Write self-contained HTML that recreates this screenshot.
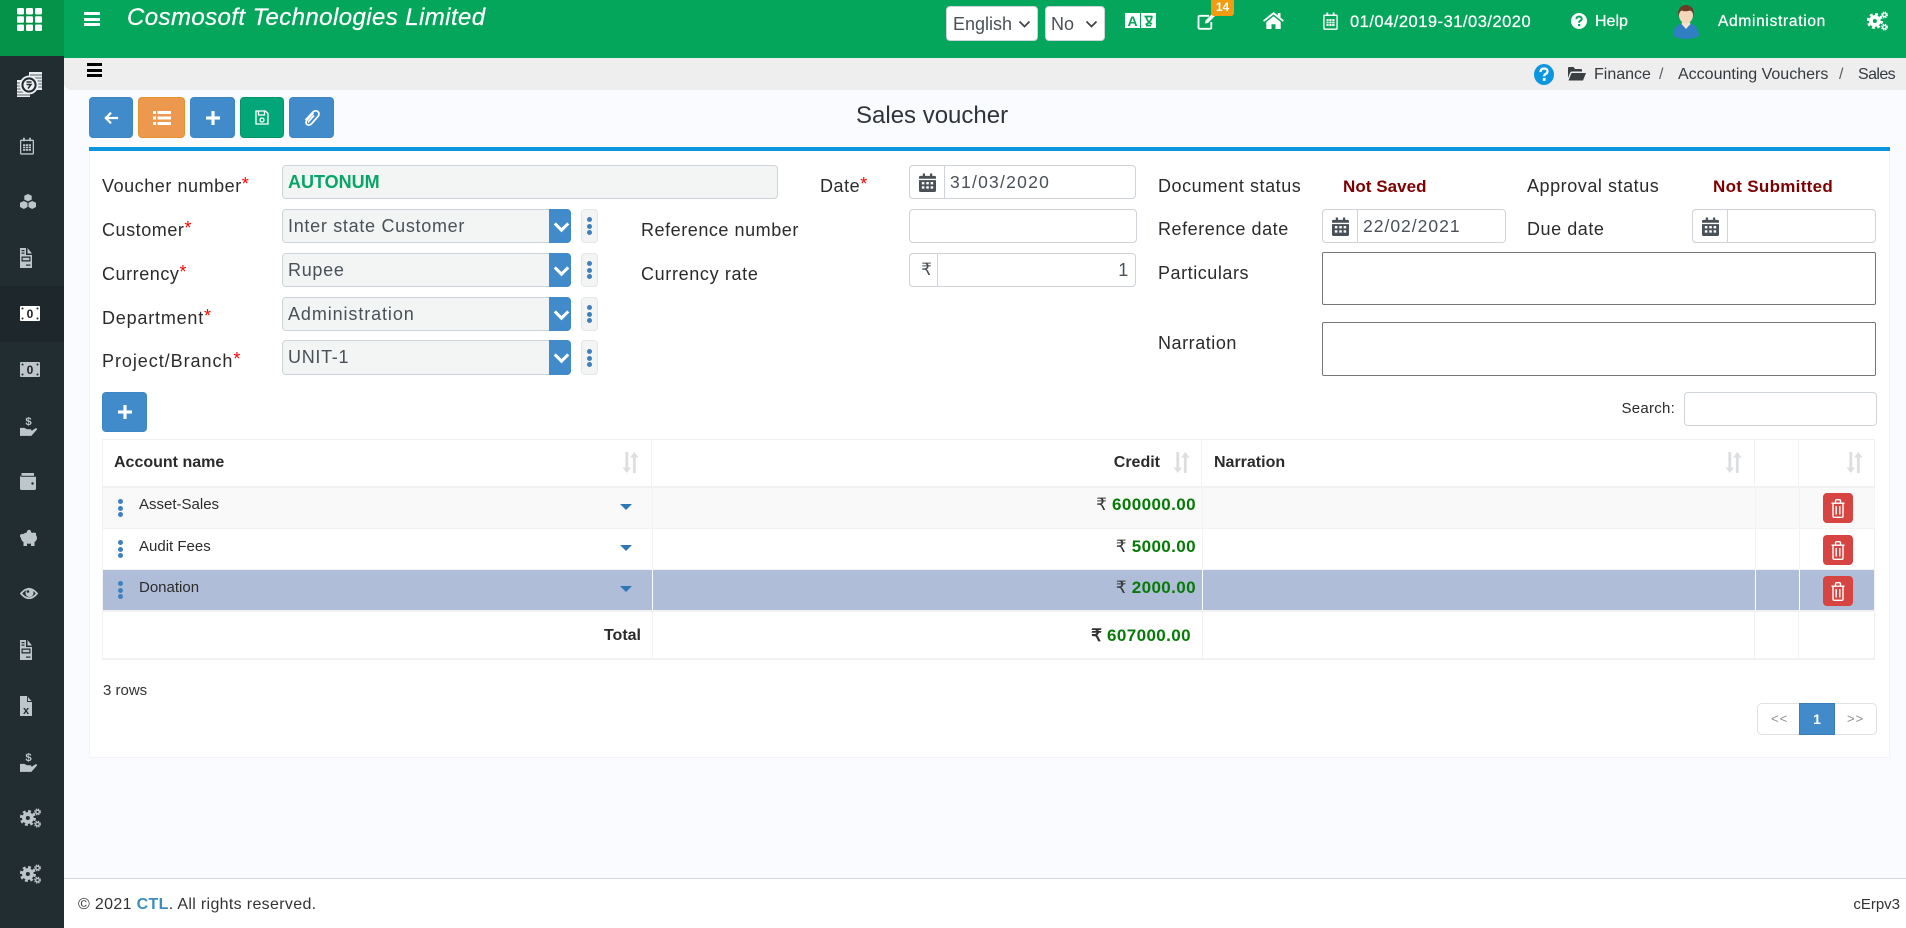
<!DOCTYPE html>
<html lang="en"><head><meta charset="utf-8"><title>Sales voucher</title>
<style>
*{box-sizing:border-box}
html,body{margin:0;padding:0;width:1906px;height:928px;overflow:hidden;background:#fafbfe;font-family:"Liberation Sans",sans-serif;color:#2a2a2a}
.a{position:absolute}
.t{position:absolute;line-height:20px;white-space:nowrap}
.l{font-size:18px;letter-spacing:.55px;color:#2b2b2b}
.l i{color:#f00;font-style:normal;font-size:18px;position:relative;top:-2px;letter-spacing:0}
.w{color:#fff;-webkit-text-stroke:.25px #fff}
.box{position:absolute;border:1px solid #ced4da;border-radius:4px;background:#fff}
.g{background:#f3f5f5}
.add{position:absolute;border:1px solid #ced4da;border-radius:4px 0 0 4px;background:#fff;display:flex;align-items:center;justify-content:center}
.val{font-size:18px;letter-spacing:.7px;color:#495057}
.sb{position:absolute;left:549px;width:22px;height:34px;background:#428bca;border-radius:0 4px 4px 0}
.sb:after{content:"";position:absolute;left:7px;top:10px;width:8px;height:8px;border-right:3px solid #fff;border-bottom:3px solid #fff;transform:rotate(45deg)}
.db{position:absolute;left:581px;width:17px;height:34px;background:#f3f5f5;border:1px solid #e3e6e8;border-radius:4px}
.dots{position:absolute;width:5px}
.dots b{display:block;width:5px;height:5px;border-radius:50%;background:#3f80c0;margin-bottom:1.5px}
.btn{position:absolute;top:97px;height:41px;border-radius:4px;display:flex;align-items:center;justify-content:center}
.ln{position:absolute;background:#f2f2f2}
.th{position:absolute;font-size:16px;font-weight:bold;color:#2b2b2b;line-height:20px;white-space:nowrap}
.cell{position:absolute;font-size:15px;line-height:20px;white-space:nowrap;color:#2b2b2b}
.amt{position:absolute;right:710px;font-size:17px;line-height:20px;white-space:nowrap;font-weight:bold;color:#067a06;letter-spacing:.4px}
.amt span{font-weight:normal;color:#333;letter-spacing:0}
.car{position:absolute;left:620px;width:0;height:0;border-left:6.5px solid transparent;border-right:6.5px solid transparent;border-top:6px solid #2f78b7}
.del{position:absolute;left:1823px;width:30px;height:30px;background:#d64541;border-radius:4px;border:1px solid #d9433f;display:flex;align-items:center;justify-content:center}
.sort{position:absolute;top:452px}
</style></head>
<body>
<svg width="0" height="0" style="position:absolute">
<defs>
<symbol id="cal" viewBox="0 0 18 20"><path d="M0 6V4.500Q0 3 1.500 3H4V0.500h2.400V3h5.200V0.500H14V3h2.500Q18 3 18 4.500V6zM0 7.500h18V18.500Q18 20 16.500 20h-15Q0 20 0 18.500z" fill="currentColor"/><g fill="#fff"><rect x="3" y="9.500" width="2.700" height="2.500"/><rect x="7.700" y="9.500" width="2.700" height="2.500"/><rect x="12.300" y="9.500" width="2.700" height="2.500"/><rect x="3" y="14" width="2.700" height="2.500"/><rect x="7.700" y="14" width="2.700" height="2.500"/><rect x="12.300" y="14" width="2.700" height="2.500"/></g></symbol>
<symbol id="calo" viewBox="0 0 16 20"><path d="M1.500 3.500h13a.8.8 0 0 1 .8.8v14a.8.8 0 0 1-.8.8h-13a.8.8 0 0 1-.8-.8v-14a.8.8 0 0 1 .8-.8z" fill="none" stroke="currentColor" stroke-width="1.500"/><path d="M3.500 0.500h2v4h-2zM10.500 0.500h2v4h-2z" fill="currentColor"/><path d="M3.500 8h9v7.500h-9z" fill="currentColor"/><path d="M6.300 8v7.500M9.500 8v7.500M3.500 10.500h9M3.500 13h9" stroke="#2b3338" stroke-width=".8"/></symbol>
<symbol id="gears" viewBox="0 0 24 22"><g fill="none" stroke="currentColor"><circle cx="9" cy="11" r="4.500" stroke-width="4.400"/><circle cx="9" cy="11" r="7.800" stroke-width="2.800" stroke-dasharray="3.300 2.825"/><circle cx="20" cy="4" r="2" stroke-width="1.500"/><circle cx="20" cy="4" r="3.300" stroke-width="1.300" stroke-dasharray="1.600 1"/><circle cx="20" cy="18" r="2" stroke-width="1.500"/><circle cx="20" cy="18" r="3.300" stroke-width="1.300" stroke-dasharray="1.600 1"/></g></symbol>
<symbol id="doc" viewBox="0 0 12 20"><path d="M0 0h6v7h6v13H0z" fill="currentColor"/><path d="M7.500 0L12 5.500H7.500z" fill="currentColor"/><g fill="#222d32"><rect x="1.500" y="2" width="3" height="1.200"/><rect x="1.500" y="4.500" width="3" height="1.200"/><rect x="1.500" y="8.500" width="9" height="5"/><rect x="6" y="16.500" width="4.500" height="1.200"/></g><rect x="2.700" y="9.800" width="6.600" height="2.400" fill="currentColor"/></symbol>
<symbol id="money" viewBox="0 0 20 15"><rect width="20" height="15" rx="1" fill="currentColor"/><text x="10" y="12" text-anchor="middle" font-family="Liberation Sans,sans-serif" font-weight="bold" font-size="12" fill="#222">0</text><g fill="#222"><circle cx="2.500" cy="2.500" r="1"/><circle cx="17.500" cy="2.500" r="1"/><circle cx="2.500" cy="12.500" r="1"/><circle cx="17.500" cy="12.500" r="1"/></g></symbol>
<symbol id="hand" viewBox="0 0 18 21"><text x="9" y="9.500" text-anchor="middle" font-family="Liberation Sans,sans-serif" font-weight="bold" font-size="12" fill="currentColor">$</text><path d="M0 12.500h4.500l3 1.500h3.500q1.500.2 1.200 1.800l4-2.800q1.900-.9 1.800 1.200L12 21H0z" fill="currentColor"/></symbol>
<symbol id="trash" viewBox="0 0 14 19"><g fill="none" stroke="#fff" stroke-width="1.400"><path d="M0.500 4.200h13"/><path d="M4.500 4V2q0-1.300 1.300-1.300h2.400q1.300 0 1.300 1.300v2"/><path d="M2 4.500v12.500q0 1.300 1.300 1.300h7.400q1.300 0 1.300-1.300V4.500"/><path d="M5.200 7v8.500M8.800 7v8.500"/></g></symbol>
<symbol id="sorti" viewBox="0 0 17 21"><path d="M3.400 0h2.800v15.500h2.800L4.800 21 .6 15.500h2.800z" fill="#dcdee0"/><path d="M10.900 21h2.800V5.500h2.800L12.300 0 8.100 5.500h2.800z" fill="#dcdee0"/></symbol>
</defs></svg>

<!-- sidebar -->
<div class="a" style="left:0;top:0;width:64px;height:928px;background:#222d32"></div>
<div class="a" style="left:0;top:0;width:64px;height:56px;background:#059349"></div>
<div class="a" style="left:0;top:286px;width:64px;height:56px;background:#1e272c"></div>
<svg class="a" style="left:17px;top:8px" width="25" height="23" fill="#fff"><rect width="7" height="6.500" rx="1.200"/><rect x="9" width="7" height="6.500" rx="1.200"/><rect x="18" width="7" height="6.500" rx="1.200"/><rect y="8.300" width="7" height="6.500" rx="1.200"/><rect x="9" y="8.300" width="7" height="6.500" rx="1.200"/><rect x="18" y="8.300" width="7" height="6.500" rx="1.200"/><rect y="16.500" width="7" height="6.500" rx="1.200"/><rect x="9" y="16.500" width="7" height="6.500" rx="1.200"/><rect x="18" y="16.500" width="7" height="6.500" rx="1.200"/></svg>
<svg class="a" style="left:17px;top:72px" width="25" height="26"><rect x="0" y="8" width="13" height="17" fill="#e8ecef"/><rect x="12" y="0" width="13" height="18" fill="#e8ecef"/><path d="M0 11h13M0 14h13M0 17h13M0 20h13M0 23h13M13 3h12M13 6h12M13 9h12M13 12h12M13 15h12" stroke="#5a646a" stroke-width="1"/><circle cx="12" cy="13" r="8.500" fill="#222d32" stroke="#eef1f3" stroke-width="1.800"/><circle cx="12" cy="13" r="5.500" fill="#eef1f3"/><path d="M9.500 10h5M9.500 12.500h4.500l-3 4" stroke="#222d32" stroke-width="1.500" fill="none"/></svg>
<svg class="a" style="left:20px;top:136px;color:#bdc6cb" width="14" height="20"><use href="#calo"/></svg>
<svg class="a" style="left:20px;top:194px" width="16" height="16" viewBox="0 0 16 16" fill="#bdc6cb"><path d="M8 0l3.700 1.800v3.800L8 7.400 4.300 5.600V1.800z"/><path d="M3.900 7L7.500 8.800v4.200L3.900 15 0 13v-4.200zM12.100 7l3.900 1.800V13l-3.900 2-3.600-2V8.800z"/></svg>
<svg class="a" style="left:20px;top:248px;color:#bdc6cb" width="12" height="20"><use href="#doc"/></svg>
<svg class="a" style="left:20px;top:306px;color:#fff" width="20" height="15"><use href="#money"/></svg>
<svg class="a" style="left:20px;top:362px;color:#bdc6cb" width="20" height="15"><use href="#money"/></svg>
<svg class="a" style="left:20px;top:416px;color:#bdc6cb" width="17" height="20"><use href="#hand"/></svg>
<svg class="a" style="left:20px;top:473px" width="16" height="17" viewBox="0 0 16 17" fill="#bdc6cb"><path d="M1.500 0H14v2.800H1.500z"/><path d="M1.500 3.800H16V15.500q0 1.500-1.500 1.500h-13Q0 17 0 15.500V2q0 1.800 1.500 1.800z"/><circle cx="12.500" cy="10.500" r="1.200" fill="#222d32"/></svg>
<svg class="a" style="left:20px;top:529px" width="18" height="17" viewBox="0 0 18 17" fill="#bdc6cb"><ellipse cx="9" cy="9" rx="8" ry="5.700"/><path d="M3.500 12h3.500v5H3.500zM11 12h3.500v5H11z"/><path d="M7 2q2-2.500 4 0v2H7z"/><path d="M13 3.500l3 .5v3h-3z"/><circle cx="2" cy="7" r="2"/></svg>
<svg class="a" style="left:20px;top:586px" width="18" height="15" viewBox="0 0 18 15"><path d="M1 7.500Q9-2 17 7.500 9 17 1 7.500z" fill="none" stroke="#bdc6cb" stroke-width="1.800"/><circle cx="9.500" cy="7" r="4" fill="#bdc6cb"/><circle cx="8" cy="5.500" r="1.300" fill="#222d32"/></svg>
<svg class="a" style="left:20px;top:640px;color:#bdc6cb" width="12" height="20"><use href="#doc"/></svg>
<svg class="a" style="left:20px;top:696px" width="12" height="20" viewBox="0 0 12 20"><path d="M0 0h7l5 5.500V20H0z" fill="#bdc6cb"/><path d="M7.500 .5v5h4.500" fill="none" stroke="#222d32" stroke-width=".9"/><text x="6" y="18" text-anchor="middle" font-family="Liberation Sans,sans-serif" font-weight="bold" font-size="11" fill="#222d32">x</text></svg>
<svg class="a" style="left:20px;top:752px;color:#bdc6cb" width="17" height="20"><use href="#hand"/></svg>
<svg class="a" style="left:20px;top:808px;color:#bdc6cb" width="21" height="20"><use href="#gears"/></svg>
<svg class="a" style="left:20px;top:864px;color:#bdc6cb" width="21" height="20"><use href="#gears"/></svg>

<!-- top bar -->
<div class="a" style="left:64px;top:0;width:1842px;height:58px;background:#03a65a"></div>
<div class="a" style="left:84px;top:12px;width:16px;height:3px;background:#fff"></div>
<div class="a" style="left:84px;top:17.500px;width:16px;height:3px;background:#fff"></div>
<div class="a" style="left:84px;top:23px;width:16px;height:3px;background:#fff"></div>
<div class="t w" style="left:127px;top:8px;font-size:24px;line-height:20px;font-style:italic;letter-spacing:.42px">Cosmosoft Technologies Limited</div>
<div class="a" style="left:946px;top:6px;width:92px;height:35px;background:#fff;border:1px solid #ced4da;border-radius:4px"></div>
<div class="t" style="left:953px;top:14px;font-size:18px;color:#495057">English</div>
<svg class="a" style="left:1018px;top:20px" width="13" height="9"><path d="M1.500 1.500L6.500 6.500 11.500 1.500" fill="none" stroke="#3d4448" stroke-width="1.700"/></svg>
<div class="a" style="left:1045px;top:6px;width:60px;height:35px;background:#fff;border:1px solid #ced4da;border-radius:4px"></div>
<div class="t" style="left:1051px;top:14px;font-size:18px;color:#495057">No</div>
<svg class="a" style="left:1085px;top:20px" width="13" height="9"><path d="M1.500 1.500L6.500 6.500 11.500 1.500" fill="none" stroke="#3d4448" stroke-width="1.700"/></svg>
<svg class="a" style="left:1125px;top:13px" width="31" height="16" viewBox="0 0 31 16"><rect width="15" height="15" fill="#fff"/><rect x="16" width="15" height="15" fill="#fff"/><text x="7.500" y="13" text-anchor="middle" font-family="Liberation Sans,sans-serif" font-weight="bold" font-size="14" fill="#03a65a">A</text><path d="M19.500 3.500h8M21 3.500q1.500 6 6 7.500M27 3.500q-1 6-6.500 8M21 12.500h5" fill="none" stroke="#03a65a" stroke-width="1.700"/></svg>
<svg class="a" style="left:1197px;top:12px" width="20" height="18" viewBox="0 0 20 18" fill="none"><path d="M12 3.800H2.800Q1.500 3.800 1.500 5V15.500Q1.500 16.800 2.800 16.800H13Q14.300 16.800 14.300 15.500V10" stroke="#fff" stroke-width="1.800"/><path d="M8 11.500l.5-3L15.500 1.500l2.500 2.500-7 7z" fill="#fff"/></svg>
<div class="a" style="left:1211px;top:0;width:23px;height:16px;background:#f39c12;border-radius:0 0 3px 3px;color:#fff;font-weight:bold;font-size:12px;line-height:15px;text-align:center">14</div>
<svg class="a" style="left:1263px;top:12px" width="21" height="17" viewBox="0 0 21 17" fill="#fff"><path d="M10.500 0L0 8.500l1.200 1.300L10.500 2.500l9.300 7.300L21 8.500l-3.500-2.900V1h-2.700v2.400z"/><path d="M10.500 4.300L3.300 10v7h5.200v-4.800h4V17h5.200v-7z"/></svg>
<svg class="a" style="left:1323px;top:12px" width="15" height="18" viewBox="0 0 16 20"><path d="M1.500 3.500h13a.8.8 0 0 1 .8.8v14a.8.8 0 0 1-.8.8h-13a.8.8 0 0 1-.8-.8v-14a.8.8 0 0 1 .8-.8z" fill="none" stroke="#fff" stroke-width="1.500"/><path d="M3.500 0.500h2v4h-2zM10.500 0.500h2v4h-2z" fill="#fff"/><path d="M3.500 8h9v7.500h-9z" fill="#fff"/><path d="M6.300 8v7.500M9.500 8v7.500M3.500 10.500h9M3.500 13h9" stroke="#03a65a" stroke-width=".8"/></svg>
<div class="t w" style="left:1350px;top:12px;font-size:16.500px;letter-spacing:.5px">01/04/2019-31/03/2020</div>
<svg class="a" style="left:1571px;top:13px" width="16" height="16" viewBox="0 0 16 16"><circle cx="8" cy="8" r="8" fill="#fff"/><path d="M5.300 6.200Q5.500 3.600 8 3.600 10.800 3.700 10.700 6 10.600 7.300 9 8 8.100 8.400 8.100 9.800" fill="none" stroke="#03a65a" stroke-width="1.900"/><rect x="7" y="11" width="2.200" height="2.200" fill="#03a65a"/></svg>
<div class="t w" style="left:1595px;top:12px;font-size:16px">Help</div>
<svg class="a" style="left:1672px;top:5px" width="28" height="34" viewBox="0 0 28 34"><path d="M1 31q0-10 8-12h10q8 2 8 12-6 3-13 3T1 31z" fill="#2f7fc2"/><path d="M9.500 19l4.500 5 4.500-5-1.500-4h-6z" fill="#f6e2d0"/><ellipse cx="14" cy="10" rx="7" ry="8.500" fill="#f5d6bb"/><path d="M6.500 12Q4.500 1 14 0 23.500 1 21.500 12 21 6 18 5.500 13 7 9.500 5.500 7 7 6.500 12z" fill="#6b3d27"/></svg>
<div class="t w" style="left:1718px;top:12px;font-size:15.500px;letter-spacing:.7px">Administration</div>
<svg class="a" style="left:1867px;top:11px;color:#fff" width="21" height="20"><use href="#gears"/></svg>

<!-- breadcrumb -->
<div class="a" style="left:64px;top:58px;width:1842px;height:32px;background:#eeeeee;border-bottom-left-radius:7px"></div>
<div class="a" style="left:87px;top:63px;width:15px;height:3px;background:#000"></div>
<div class="a" style="left:87px;top:68.500px;width:15px;height:3px;background:#000"></div>
<div class="a" style="left:87px;top:74px;width:15px;height:3px;background:#000"></div>
<svg class="a" style="left:1534px;top:64px" width="20" height="21" viewBox="0 0 20 21"><ellipse cx="10" cy="10.500" rx="10" ry="10.500" fill="#0c96e0"/><path d="M6.500 8Q6.700 4.500 10 4.500 13.600 4.600 13.500 7.500 13.400 9.200 11.500 10 10.200 10.600 10.200 12.400" fill="none" stroke="#fff" stroke-width="2.300"/><rect x="8.800" y="14" width="2.800" height="2.800" fill="#fff"/></svg>
<svg class="a" style="left:1568px;top:67px" width="18" height="14" viewBox="0 0 18 14" fill="#3a3f42"><path d="M0 1q0-1 1-1h4.500l1.500 2h6q1 0 1 1v1.500H4Q2.500 4.500 2 6L0 11z"/><path d="M3.500 6H18l-3 7.500H.5z"/></svg>
<div class="t" style="left:1594px;top:65px;font-size:16px;color:#343a40">Finance</div>
<div class="t" style="left:1659px;top:65px;font-size:16px;color:#5b6166">/</div>
<div class="t" style="left:1678px;top:65px;font-size:16px;color:#343a40">Accounting Vouchers</div>
<div class="t" style="left:1839px;top:65px;font-size:16px;color:#5b6166">/</div>
<div class="t" style="left:1858px;top:65px;font-size:16px;letter-spacing:-.6px;color:#343a40">Sales</div>

<!-- toolbar -->
<div class="btn" style="left:89px;width:44px;background:#428bca;border:1px solid #3f85c2"><svg width="15" height="14" viewBox="0 0 17 15"><path d="M8 1.500L2 7.500l6 6M2.500 7.500H16" fill="none" stroke="#fff" stroke-width="2.500"/></svg></div>
<div class="btn" style="left:138px;width:47px;background:#ec994f;border:1px solid #e8912f"><svg width="18" height="14" viewBox="0 0 18 14" fill="#fff"><rect width="3" height="3"/><rect x="4.500" width="13.500" height="3"/><rect y="5.500" width="3" height="3"/><rect x="4.500" y="5.500" width="13.500" height="3"/><rect y="11" width="3" height="3"/><rect x="4.500" y="11" width="13.500" height="3"/></svg></div>
<div class="btn" style="left:190px;width:45px;background:#428bca;border:1px solid #3f85c2"><svg width="14" height="14" viewBox="0 0 16 16" fill="#fff"><rect x="6.200" width="3.600" height="16"/><rect y="6.200" width="16" height="3.600"/></svg></div>
<div class="btn" style="left:240px;width:44px;background:#03a678;border:1px solid #059469"><svg width="14" height="15" viewBox="0 0 14 15" fill="none" stroke="#fff" stroke-width="1.300"><path d="M1 1h9.500L13 3.500V14H1z"/><path d="M3.500 1v4h6V1"/><circle cx="7" cy="10" r="2"/></svg></div>
<div class="btn" style="left:289px;width:45px;background:#428bca;border:1px solid #3f85c2"><svg width="17" height="18" viewBox="0 0 17 18" fill="none" stroke="#fff" stroke-width="1.700"><path d="M10.500 4L4 11q-2 2.800 0 4.500 2 1.500 4.300-.5l6.700-7.500q2-3-.2-5-2.400-1.700-4.800.5L2.500 11"/><path d="M11 6.500L6 12q-.8 1 .2 1.500"/></svg></div>
<div class="t" style="left:856px;top:106px;font-size:24px;color:#2f3438">Sales voucher</div>

<!-- card -->
<div class="a" style="left:89px;top:147px;width:1801px;height:611px;background:#fff;border:1px solid #f3f4f6;border-top:0"></div>
<div class="a" style="left:89px;top:147px;width:1801px;height:4px;background:#0c96e0"></div>

<!-- form left -->
<div class="t l" style="left:102px;top:176px">Voucher number<i>*</i></div>
<div class="t l" style="left:102px;top:220px">Customer<i>*</i></div>
<div class="t l" style="left:102px;top:264px">Currency<i>*</i></div>
<div class="t l" style="left:102px;top:308px;letter-spacing:.8px">Department<i>*</i></div>
<div class="t l" style="left:102px;top:351px;letter-spacing:.95px">Project/Branch<i>*</i></div>

<div class="box g" style="left:282px;top:165px;width:496px;height:34px"></div>
<div class="t" style="left:288px;top:172px;font-size:18px;font-weight:bold;color:#07a569">AUTONUM</div>
<div class="box g" style="left:282px;top:209px;width:280px;height:34px"></div>
<div class="sb" style="top:209px"></div><div class="db" style="top:209px"></div>
<div class="dots" style="left:587px;top:217px"><b></b><b></b><b></b></div>
<div class="t val" style="left:288px;top:216px">Inter state Customer</div>
<div class="box g" style="left:282px;top:253px;width:280px;height:34px"></div>
<div class="sb" style="top:253px"></div><div class="db" style="top:253px"></div>
<div class="dots" style="left:587px;top:261px"><b></b><b></b><b></b></div>
<div class="t val" style="left:288px;top:260px">Rupee</div>
<div class="box g" style="left:282px;top:297px;width:280px;height:34px"></div>
<div class="sb" style="top:297px"></div><div class="db" style="top:297px"></div>
<div class="dots" style="left:587px;top:305px"><b></b><b></b><b></b></div>
<div class="t val" style="left:288px;top:304px;letter-spacing:.9px">Administration</div>
<div class="box g" style="left:282px;top:340px;width:280px;height:35px"></div>
<div class="sb" style="top:340px;height:35px"></div><div class="db" style="top:340px;height:35px"></div>
<div class="dots" style="left:587px;top:349px"><b></b><b></b><b></b></div>
<div class="t val" style="left:288px;top:347px">UNIT-1</div>

<!-- form middle -->
<div class="t l" style="left:820px;top:176px">Date<i>*</i></div>
<div class="t l" style="left:641px;top:220px">Reference number</div>
<div class="t l" style="left:641px;top:264px;letter-spacing:.65px">Currency rate</div>
<div class="box" style="left:909px;top:165px;width:227px;height:34px"></div>
<div class="add" style="left:909px;top:165px;width:36px;height:34px"><svg style="color:#495057" width="17" height="19"><use href="#cal"/></svg></div>
<div class="t val" style="left:950px;top:172px;font-size:17.500px;letter-spacing:1.25px">31/03/2020</div>
<div class="box" style="left:909px;top:209px;width:228px;height:34px"></div>
<div class="box" style="left:909px;top:253px;width:227px;height:34px"></div>
<div class="add" style="left:909px;top:253px;width:29px;height:34px;font-size:17px;color:#495057"><span style="position:relative;left:3px">₹</span></div>
<div class="t val" style="right:777px;top:260px">1</div>

<!-- form right -->
<div class="t l" style="left:1158px;top:176px">Document status</div>
<div class="t l" style="left:1343px;top:177px;color:#7f0000;font-size:17px;font-weight:bold;letter-spacing:.05px">Not Saved</div>
<div class="t l" style="left:1527px;top:176px">Approval status</div>
<div class="t l" style="left:1713px;top:177px;color:#7f0000;font-size:17px;font-weight:bold;letter-spacing:.3px">Not Submitted</div>
<div class="t l" style="left:1158px;top:219px">Reference date</div>
<div class="box" style="left:1322px;top:209px;width:184px;height:34px"></div>
<div class="add" style="left:1322px;top:209px;width:36px;height:34px"><svg style="color:#495057" width="17" height="19"><use href="#cal"/></svg></div>
<div class="t val" style="left:1363px;top:216px;font-size:17.500px;letter-spacing:1px">22/02/2021</div>
<div class="t l" style="left:1527px;top:219px">Due date</div>
<div class="box" style="left:1692px;top:209px;width:184px;height:34px"></div>
<div class="add" style="left:1692px;top:209px;width:36px;height:34px"><svg style="color:#495057" width="17" height="19"><use href="#cal"/></svg></div>
<div class="t l" style="left:1158px;top:263px">Particulars</div>
<div class="a" style="left:1322px;top:252px;width:554px;height:53px;background:#fff;border:1px solid #767676;border-radius:2px"></div>
<div class="t l" style="left:1158px;top:333px">Narration</div>
<div class="a" style="left:1322px;top:322px;width:554px;height:54px;background:#fff;border:1px solid #767676;border-radius:2px"></div>

<!-- add + search -->
<div class="a" style="left:102px;top:392px;width:45px;height:40px;background:#428bca;border:1px solid #3f85c2;border-radius:4px;display:flex;align-items:center;justify-content:center"><svg width="14" height="14" viewBox="0 0 16 16" fill="#fff"><rect x="6.200" width="3.600" height="16"/><rect y="6.200" width="16" height="3.600"/></svg></div>
<div class="t" style="right:231px;top:399px;font-size:15px;letter-spacing:.25px;color:#2b2b2b">Search:</div>
<div class="box" style="left:1684px;top:392px;width:193px;height:34px"></div>

<!-- table -->
<div class="a" style="left:102px;top:439px;width:1772px;height:221px;background:#fff"></div>
<div class="a" style="left:102px;top:488px;width:1772px;height:41px;background:#f9f9f9"></div>
<div class="a" style="left:102px;top:570px;width:1772px;height:40px;background:#b0bdd9"></div>
<div class="ln" style="left:102px;top:439px;width:1772px;height:1px"></div>
<div class="ln" style="left:102px;top:486px;width:1772px;height:2px"></div>
<div class="ln" style="left:102px;top:528px;width:1772px;height:1px"></div>
<div class="ln" style="left:102px;top:569px;width:1772px;height:1px"></div>
<div class="ln" style="left:102px;top:610px;width:1772px;height:2px"></div>
<div class="ln" style="left:102px;top:658px;width:1772px;height:2px"></div>
<div class="ln" style="left:102px;top:439px;width:1px;height:221px"></div>
<div class="ln" style="left:1874px;top:439px;width:1px;height:221px"></div>
<div class="ln" style="left:651px;top:439px;width:1px;height:49px"></div>
<div class="ln" style="left:1201px;top:439px;width:1px;height:49px"></div>
<div class="ln" style="left:1754px;top:439px;width:1px;height:49px"></div>
<div class="ln" style="left:1798px;top:439px;width:1px;height:49px"></div>
<div class="ln" style="left:652px;top:488px;width:1px;height:82px"></div>
<div class="ln" style="left:1202px;top:488px;width:1px;height:82px"></div>
<div class="ln" style="left:1755px;top:488px;width:1px;height:82px"></div>
<div class="ln" style="left:1799px;top:488px;width:1px;height:82px"></div>
<div class="a" style="left:652px;top:570px;width:1px;height:40px;background:#fff"></div>
<div class="a" style="left:1202px;top:570px;width:1px;height:40px;background:#fff"></div>
<div class="a" style="left:1755px;top:570px;width:1px;height:40px;background:#fff"></div>
<div class="a" style="left:1799px;top:570px;width:1px;height:40px;background:#fff"></div>
<div class="ln" style="left:652px;top:612px;width:1px;height:46px"></div>
<div class="ln" style="left:1202px;top:612px;width:1px;height:46px"></div>
<div class="ln" style="left:1754px;top:612px;width:1px;height:46px"></div>
<div class="ln" style="left:1798px;top:612px;width:1px;height:46px"></div>

<div class="th" style="left:114px;top:453px">Account name</div>
<div class="th" style="right:746px;top:453px">Credit</div>
<div class="th" style="left:1214px;top:453px">Narration</div>
<svg class="sort" style="left:622px" width="17" height="21"><use href="#sorti"/></svg>
<svg class="sort" style="left:1173px" width="17" height="21"><use href="#sorti"/></svg>
<svg class="sort" style="left:1725px" width="17" height="21"><use href="#sorti"/></svg>
<svg class="sort" style="left:1846px" width="17" height="21"><use href="#sorti"/></svg>

<div class="dots" style="left:118px;top:499px"><b></b><b></b><b></b></div>
<div class="cell" style="left:139px;top:495px">Asset-Sales</div>
<div class="car" style="top:504px"></div>
<div class="amt" style="top:495px"><span>₹</span> 600000.00</div>
<div class="del" style="top:493px"><svg width="14" height="19"><use href="#trash"/></svg></div>

<div class="dots" style="left:118px;top:540px"><b></b><b></b><b></b></div>
<div class="cell" style="left:139px;top:537px">Audit Fees</div>
<div class="car" style="top:545px"></div>
<div class="amt" style="top:537px"><span>₹</span> 5000.00</div>
<div class="del" style="top:535px"><svg width="14" height="19"><use href="#trash"/></svg></div>

<div class="dots" style="left:118px;top:581px"><b></b><b></b><b></b></div>
<div class="cell" style="left:139px;top:578px">Donation</div>
<div class="car" style="top:586px"></div>
<div class="amt" style="top:578px"><span>₹</span> 2000.00</div>
<div class="del" style="top:576px"><svg width="14" height="19"><use href="#trash"/></svg></div>

<div class="th" style="right:1265px;top:626px">Total</div>
<div class="amt" style="top:626px;right:715px"><span style="font-weight:bold">₹</span> 607000.00</div>

<div class="t" style="left:103px;top:681px;font-size:15px;color:#333">3 rows</div>

<!-- pagination -->
<div class="a" style="left:1757px;top:703px;width:120px;height:32px;border:1px solid #dfe1e3;border-radius:5px;background:#fff"></div>
<div class="a" style="left:1799px;top:703px;width:36px;height:32px;background:#428bca;border:1px solid #3a7db8;color:#fff;font-size:14px;font-weight:bold;line-height:30px;text-align:center">1</div>
<div class="t" style="left:1771px;top:709px;font-size:13px;color:#8a8f94;letter-spacing:1px">&lt;&lt;</div>
<div class="t" style="left:1847px;top:709px;font-size:13px;color:#8a8f94;letter-spacing:1px">&gt;&gt;</div>

<!-- footer -->
<div class="a" style="left:64px;top:878px;width:1842px;height:50px;background:#fff;border-top:1px solid #d2d6de"></div>
<div class="t" style="left:78px;top:895px;font-size:16px;letter-spacing:.33px;color:#333">© 2021 <span style="color:#3c8dbc;font-weight:bold">CTL</span>. All rights reserved.</div>
<div class="t" style="right:6px;top:895px;font-size:15px;color:#333">cErpv3</div>
</body></html>
